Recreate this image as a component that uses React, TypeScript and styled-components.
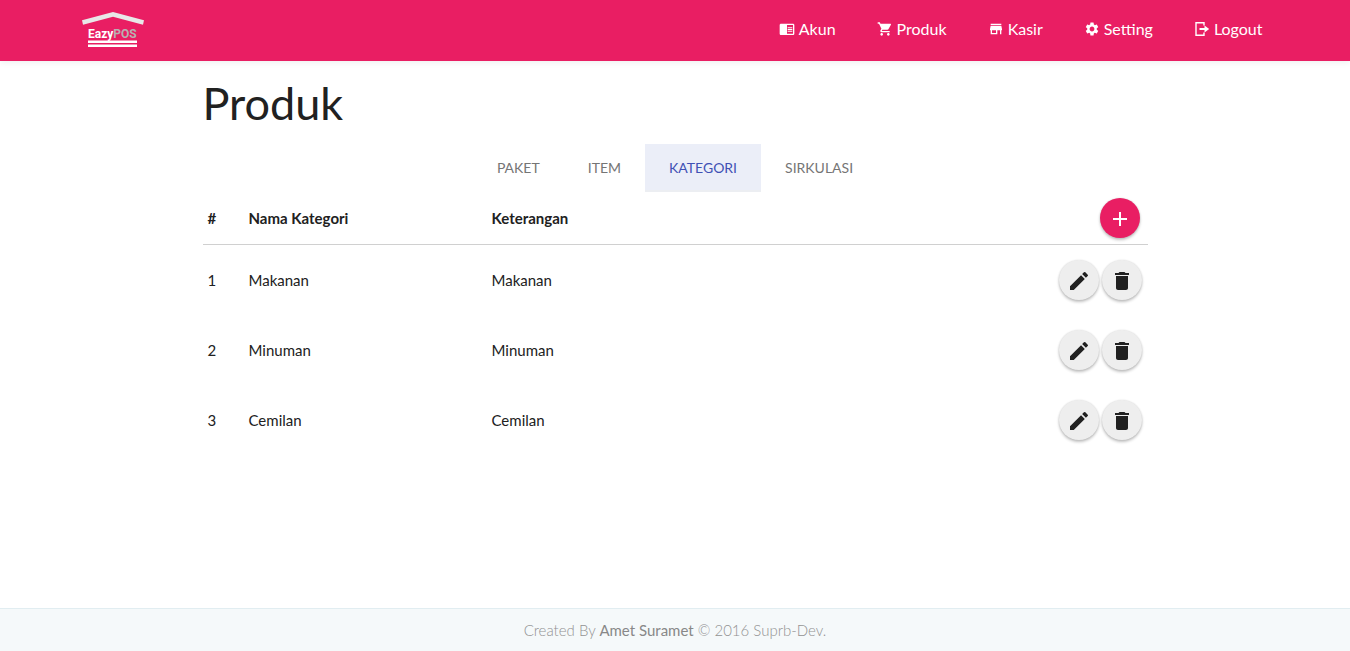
import React from "react";
import styled, { createGlobalStyle } from "styled-components";
import {
  MdAdd,
  MdChromeReaderMode,
  MdCreate,
  MdDelete,
  MdSettings,
  MdShoppingCart,
  MdStore,
} from "react-icons/md";

const pink = "#e91e63";
const ink = "#212121";

const GlobalStyle = createGlobalStyle`
  * { box-sizing: border-box; }
  body {
    margin: 0;
    background: #fff;
    color: ${ink};
    font: 400 15px/22px Lato, "Liberation Sans", sans-serif;
  }
`;

const Page = styled.div`
  min-height: 100vh;
  display: flex;
  flex-direction: column;
`;

const Header = styled.header`
  display: flex;
  justify-content: space-between;
  align-items: center;
  height: 61px;
  padding: 0 5%;
  background: ${pink};
  box-shadow: 0 2px 6px rgba(0, 0, 0, 0.06);
`;

const Brand = styled.a`
  display: block;
  margin-left: 12px;
  height: 41px;
`;

const Menu = styled.nav`
  display: flex;
  gap: 1px;
  padding-bottom: 4px;
`;

const MenuLink = styled.a`
  display: flex;
  align-items: center;
  gap: 4px;
  padding: 0 20px;
  color: #fff;
  font-size: 16px;
  line-height: 24px;
  text-decoration: none;
`;

const Main = styled.main`
  flex: 1;
  width: 70%;
  margin: 0 auto;
`;

const Title = styled.h1`
  margin: 18px 0 17px;
  font-size: 45px;
  font-weight: 400;
  line-height: 48px;
`;

const Tabs = styled.div`
  display: flex;
  justify-content: center;
`;

const Tab = styled.button<{ $active?: boolean }>`
  height: 48px;
  padding: 0 24px;
  border: 0;
  background: ${(p) => (p.$active ? "#ebeef8" : "transparent")};
  box-shadow: ${(p) => (p.$active ? "inset 0 -2px #eceef2" : "none")};
  color: ${(p) => (p.$active ? "#3f51b5" : "#757575")};
  font: inherit;
  font-size: 14px;
  cursor: pointer;
`;

const Table = styled.table`
  width: 100%;
  border-collapse: separate;
  border-spacing: 0;
  table-layout: fixed;
`;

const HeadCell = styled.th<{ $width?: string }>`
  width: ${(p) => p.$width ?? "auto"};
  height: 53px;
  padding: 0 5px;
  border-bottom: 1px solid #d0d0d0;
  text-align: left;
  font-weight: 700;
`;

const Cell = styled.td`
  height: 70px;
  padding: 0 5px;
`;

const Actions = styled.div<{ $inset?: boolean }>`
  display: flex;
  justify-content: flex-end;
  gap: 3px;
  padding-right: ${(p) => (p.$inset ? "3px" : "1px")};
`;

const RoundButton = styled.button<{ $primary?: boolean }>`
  display: flex;
  align-items: center;
  justify-content: center;
  width: 40px;
  height: 40px;
  padding: 2px 0 0;
  border: 0;
  border-radius: 50%;
  background: ${(p) => (p.$primary ? pink : "#eee")};
  color: ${(p) => (p.$primary ? "#fff" : ink)};
  box-shadow: 0 2px 3px rgba(0, 0, 0, 0.24), 0 0 2px rgba(0, 0, 0, 0.12);
  cursor: pointer;
`;

const Footer = styled.footer`
  padding: 10px 0;
  border-top: 1px solid #e1edf1;
  background: #f5f9fa;
  color: #929292;
  font-weight: 300;
  text-align: center;
`;

const Author = styled.strong`
  font-weight: 400;
  color: #888;
`;

const LogoText = styled.text`
  font: 700 12px Roboto, "Liberation Sans", sans-serif;
`;

const Logo = () => (
  <svg width="66" height="41" viewBox="0 0 66 41" role="img" aria-label="EazyPOS">
    <path d="M2 10.200 33 2l31 8.200-1 4.600L33 6.700 3 14.800z" fill="#e8e8e8" />
    <LogoText x="8" y="28" fill="#fff">
      Eazy<tspan fill="#b8b0b2">POS</tspan>
    </LogoText>
    <path d="M8 30.500h49v2.500H8zM8 34.500h49v2.500H8z" fill="#fff" />
  </svg>
);

const LogoutIcon = ({ size }: { size: number }) => (
  <svg width={size} height={size} viewBox="0 0 16 16" fill="none">
    <path d="M10 4.500V1.700H2v12.600h8v-2.800" stroke="currentColor" strokeWidth="1.400" />
    <path d="M5.500 7h5V4.500L15.200 8l-4.700 3.500V9h-5z" fill="currentColor" />
  </svg>
);

const menu = [
  { label: "Akun", Icon: MdChromeReaderMode },
  { label: "Produk", Icon: MdShoppingCart },
  { label: "Kasir", Icon: MdStore },
  { label: "Setting", Icon: MdSettings },
  { label: "Logout", Icon: LogoutIcon },
];

const tabs = ["PAKET", "ITEM", "KATEGORI", "SIRKULASI"];
const categories = ["Makanan", "Minuman", "Cemilan"];

export default function App() {
  return (
    <Page>
      <GlobalStyle />
      <Header>
        <Brand href="#">
          <Logo />
        </Brand>
        <Menu>
          {menu.map(({ label, Icon }) => (
            <MenuLink href="#" key={label}>
              <Icon size={16} />
              {label}
            </MenuLink>
          ))}
        </Menu>
      </Header>
      <Main>
        <Title>Produk</Title>
        <Tabs role="tablist">
          {tabs.map((tab) => (
            <Tab key={tab} role="tab" aria-selected={tab === "KATEGORI"} $active={tab === "KATEGORI"}>
              {tab}
            </Tab>
          ))}
        </Tabs>
        <Table>
          <thead>
            <tr>
              <HeadCell $width="41px">#</HeadCell>
              <HeadCell $width="243px">Nama Kategori</HeadCell>
              <HeadCell>Keterangan</HeadCell>
              <HeadCell $width="110px">
                <Actions $inset>
                  <RoundButton $primary aria-label="Tambah kategori">
                    <MdAdd size={24} />
                  </RoundButton>
                </Actions>
              </HeadCell>
            </tr>
          </thead>
          <tbody>
            {categories.map((name, index) => (
              <tr key={name}>
                <Cell>{index + 1}</Cell>
                <Cell>{name}</Cell>
                <Cell>{name}</Cell>
                <Cell>
                  <Actions>
                    <RoundButton aria-label={`Ubah ${name}`}>
                      <MdCreate size={24} />
                    </RoundButton>
                    <RoundButton aria-label={`Hapus ${name}`}>
                      <MdDelete size={24} />
                    </RoundButton>
                  </Actions>
                </Cell>
              </tr>
            ))}
          </tbody>
        </Table>
      </Main>
      <Footer>
        Created By <Author>Amet Suramet</Author> © 2016 Suprb-Dev.
      </Footer>
    </Page>
  );
}
